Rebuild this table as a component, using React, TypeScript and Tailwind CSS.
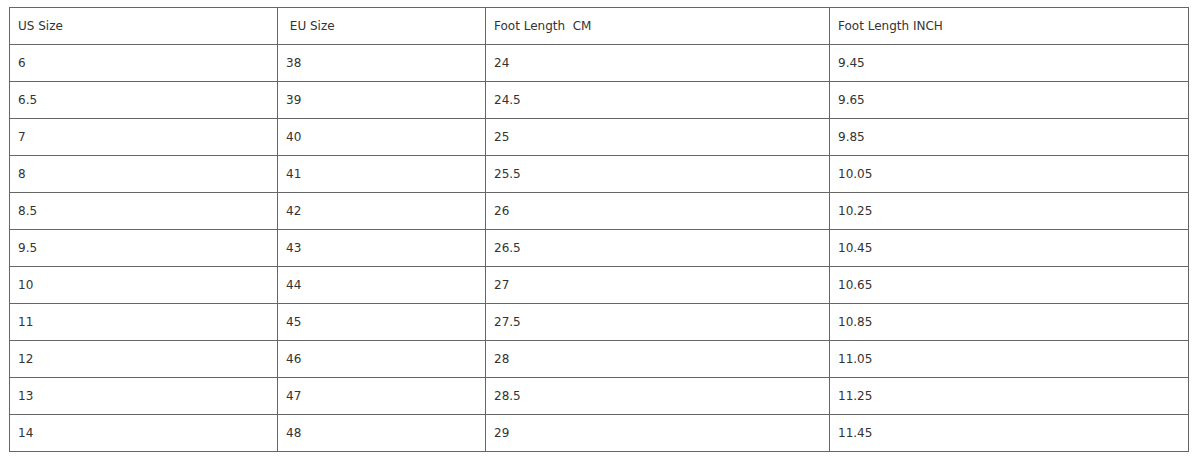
import React from "react";

const rows: string[][] = [
  ["6", "38", "24", "9.45"],
  ["6.5", "39", "24.5", "9.65"],
  ["7", "40", "25", "9.85"],
  ["8", "41", "25.5", "10.05"],
  ["8.5", "42", "26", "10.25"],
  ["9.5", "43", "26.5", "10.45"],
  ["10", "44", "27", "10.65"],
  ["11", "45", "27.5", "10.85"],
  ["12", "46", "28", "11.05"],
  ["13", "47", "28.5", "11.25"],
  ["14", "48", "29", "11.45"],
];

export default function App() {
  return (
    <div className="w-[1200px] h-[464px] bg-white pt-[7px] pl-[9px]" style={{ fontFamily: '"DejaVu Sans", Verdana, sans-serif' }}>
      <table className="border-collapse text-[12px] text-[#333] w-[1179px] table-fixed">
        <colgroup>
          <col className="w-[268px]" />
          <col className="w-[208px]" />
          <col className="w-[344px]" />
          <col className="w-[359px]" />
        </colgroup>
        <tbody>
          <tr className="h-[37px]">
            <td className="border border-[#666] pl-[8px] align-middle">US Size</td>
            <td className="border border-[#666] pl-[8px] align-middle whitespace-pre"> EU Size</td>
            <td className="border border-[#666] pl-[8px] align-middle whitespace-pre">Foot Length  CM</td>
            <td className="border border-[#666] pl-[8px] align-middle">Foot Length INCH</td>
          </tr>
          {rows.map((r, i) => (
            <tr key={i} className="h-[37px]">
              {r.map((c, j) => (
                <td key={j} className="border border-[#666] pl-[8px] align-middle">{c}</td>
              ))}
            </tr>
          ))}
        </tbody>
      </table>
    </div>
  );
}
